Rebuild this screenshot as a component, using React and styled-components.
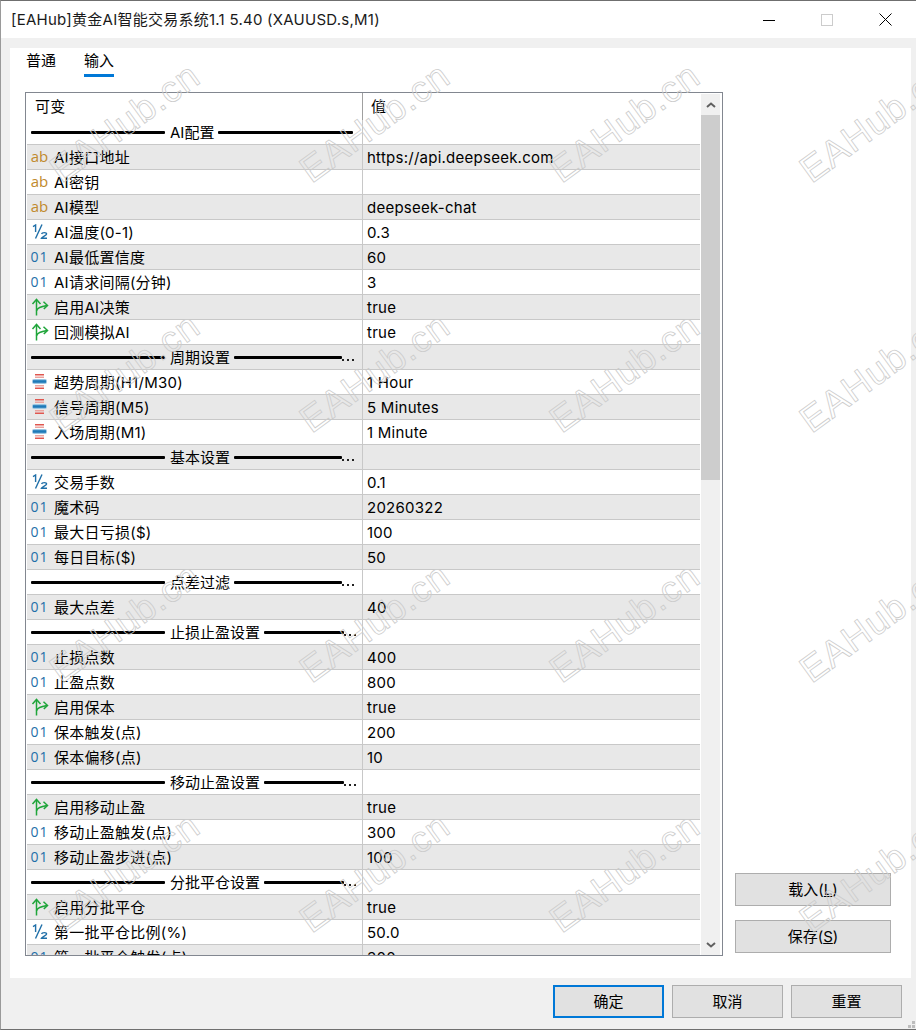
import styled, { createGlobalStyle } from 'styled-components';

const GlobalStyle = createGlobalStyle`
  html, body { margin: 0; padding: 0; background: #f0f0f0; }
  * { box-sizing: border-box; }
`

const FONT = `Inter, "Noto Sans CJK SC", sans-serif`

const Window = styled.div`
  position: relative;
  width: 916px;
  height: 1030px;
  display: flex;
  flex-direction: column;
  overflow: hidden;
  background: #f0f0f0;
  border-top: 1px solid #6f6f6f;
  border-bottom: 1px solid #6f6f6f;
  border-left: 1px solid #9a9a9a;
  font: 15px/20px ${FONT};
  letter-spacing: 0.25px;
  color: #000;
`
const TitleBar = styled.div`
  height: 37px;
  flex: none;
  display: flex;
  align-items: center;
  background: #fff;
  padding-left: 10px;
`
const Title = styled.div`
  flex: 1;
  color: #1a1a1a;
`
const WinControls = styled.div`
  display: flex;
  padding-right: 1px;
`
const WinBtn = styled.div`
  width: 58.5px;
  height: 37px;
  display: flex;
  align-items: center;
  justify-content: center;
`
const Panel = styled.div`
  flex: none;
  height: 930px;
  margin: 10px 5px 0 9px;
  background: #fff;
  display: flex;
  flex-direction: column;
`
const Tabs = styled.div`
  height: 29px;
  flex: none;
  display: flex;
  gap: 28px;
  padding-left: 16px;
  letter-spacing: 0;
`
const Tab = styled.div`
  height: 29px;
  padding-top: 3px;
  border-bottom: ${props => props.$active ? '3px solid #0078d7' : 'none'};
`
const Content = styled.div`
  flex: none;
  display: flex;
  margin: 15px 0 0 15px;
`
const TableFrame = styled.div`
  width: 698px;
  height: 864px;
  flex: none;
  display: flex;
  border: 1px solid #828790;
  padding-left: 1px;
  background: #fff;
`
const List = styled.div`
  width: 673px;
  flex: none;
  overflow: hidden;
`
const HeaderRow = styled.div`
  height: 27px;
  display: grid;
  grid-template-columns: 335px 1fr;
`
const HeaderCell = styled.div`
  padding: 4px 0 0 8px;
  border-left: ${props => props.$right ? '1px solid #a0a0a0' : 'none'};
`
const Row = styled.div`
  height: 25px;
  display: grid;
  grid-template-columns: 335px 1fr;
  background: ${props => props.$alt ? '#e8e8e8' : '#fff'};
  border-bottom: 1px solid #c8c8c8;
`
const NameCell = styled.div`
  display: flex;
  align-items: center;
  white-space: nowrap;
`
const NameText = styled.span`
  margin-top: 2px;
`
const GroupCell = styled.div`
  display: flex;
  align-items: center;
  padding-left: 4px;
  white-space: nowrap;
`
const IconSlot = styled.div`
  width: 27px;
  height: 24px;
  flex: none;
  display: flex;
  align-items: center;
  justify-content: center;
  padding-right: 2px;
`
const TypeText = styled.span`
  font: ${props => props.$size}px/16px "Open Sans", sans-serif;
  letter-spacing: ${props => props.$spacing}px;
  color: ${props => props.$color};
  position: relative;
  top: ${props => props.$top}px;
`
const ValueCell = styled.div`
  display: flex;
  align-items: center;
  padding: 2px 0 0 4px;
  border-left: 1px solid #c8c8c8;
  white-space: nowrap;
`
const Rule = styled.div`
  height: 3px;
  flex: none;
  width: ${props => props.$width}px;
  background: #000;
  border-radius: 1px;
`
const GroupLabel = styled.span`
  margin: 2px 4px 0 5px;
  letter-spacing: 0;
`
const Dots = styled.span`
  width: 12px;
  height: 2px;
  margin-top: 5px;
  display: flex;
  justify-content: space-between;
  flex: none;
`
const Dot = styled.i`
  width: 2px;
  height: 2px;
  background: #222;
`
const ScrollBar = styled.div`
  width: 19px;
  flex: none;
  margin-left: 1px;
  margin-top: 1px;
  background: #f0f0f0;
  display: flex;
  flex-direction: column;
`
const ScrollArrow = styled.div`
  height: 21px;
  flex: none;
  display: flex;
  align-items: center;
  justify-content: center;
`
const ScrollThumb = styled.div`
  height: 365px;
  flex: none;
  background: #cdcdcd;
`
const ScrollRest = styled.div`
  flex: 1;
`
const SideColumn = styled.div`
  width: 156px;
  margin-left: 12px;
  padding-bottom: 3px;
  display: flex;
  flex-direction: column;
  justify-content: flex-end;
  gap: 14px;
`
const Button = styled.div`
  height: 33px;
  width: ${props => props.$wide ? '156px' : '111px'};
  display: flex;
  align-items: center;
  justify-content: center;
  letter-spacing: 0;
  background: #e1e1e1;
  border: ${props => props.$primary ? '2px solid #0078d7' : '1px solid #adadad'};
`
const Mnemonic = styled.span`
  text-decoration: underline;
`
const Footer = styled.div`
  flex: 1;
  display: flex;
  justify-content: flex-end;
  gap: 8px;
  padding: 7px 14px 0 0;
`
const Grip = styled.div`
  position: absolute;
  right: 1px;
  bottom: 1px;
  width: 11px;
  height: 11px;
`
const WatermarkLayer = styled.div`
  position: absolute;
  left: -1px;
  top: -3px;
  display: grid;
  grid-template-columns: repeat(4, 250px);
  grid-template-rows: repeat(4, 250px);
  pointer-events: none;
`
const Watermark = styled.div`
  display: flex;
  align-items: center;
  justify-content: center;
  font: 37px/44px "Liberation Sans", sans-serif;
  letter-spacing: 1px;
  color: transparent;
  -webkit-text-stroke: 0.8px #cccccc;
  transform: rotate(-36deg);
  white-space: nowrap;
`

const AB = () => <TypeText $color="#c08a2c" $size={15} $spacing={0} $top={-1}>ab</TypeText>
const INT = () => <TypeText $color="#1f6fa8" $size={14} $spacing={1} $top={0}>01</TypeText>

const HalfIcon = () => (
  <svg width="16" height="16" viewBox="0 0 16 16" fill="none" stroke="#1f6fa8" strokeWidth="1.4">
    <path d="M1 2.6 L3.6 1 V8" />
    <path d="M10 .5 L3.5 14.5" />
    <path d="M9.6 10 C10 8.2 14.6 8.2 14.6 10 C14.6 11.6 10 12.4 9.4 14.3 H15" />
  </svg>
)

const BoolIcon = () => (
  <svg width="18" height="18" viewBox="0 0 18 18" fill="none" stroke="#1fa53a" strokeWidth="1.5">
    <path d="M5.5 17.5 V2" />
    <path d="M1.5 6 L5.5 1.5 L9.5 6" />
    <path d="M5.5 13 C6 9.5 10 8.5 16 7.5" />
    <path d="M12.5 3.8 L16.5 7.4 L12.8 11" />
  </svg>
)

const EnumIcon = () => (
  <svg width="15" height="16" viewBox="0 0 15 16">
    <rect x="3" y="0" width="9" height="1.5" fill="#e0564f" />
    <rect x="3" y="2.5" width="9" height="1.5" fill="#eaa5a1" />
    <rect x="0" y="5" width="15" height="5" rx="2" fill="#9cc6e2" />
    <rect x="1" y="6.2" width="13" height="2.6" fill="#1f7ab8" />
    <rect x="3" y="11" width="9" height="1.5" fill="#eaa5a1" />
    <rect x="3" y="13.5" width="9" height="1.5" fill="#e0564f" />
  </svg>
)

const ICONS = { ab: AB, int: INT, half: HalfIcon, bool: BoolIcon, enum: EnumIcon }

const rows = [
  { group: 'AI配置', right: 135, full: true },
  { icon: 'ab', name: 'AI接口地址', value: 'https://api.deepseek.com' },
  { icon: 'ab', name: 'AI密钥', value: '' },
  { icon: 'ab', name: 'AI模型', value: 'deepseek-chat' },
  { icon: 'half', name: 'AI温度(0-1)', value: '0.3' },
  { icon: 'int', name: 'AI最低置信度', value: '60' },
  { icon: 'int', name: 'AI请求间隔(分钟)', value: '3' },
  { icon: 'bool', name: '启用AI决策', value: 'true' },
  { icon: 'bool', name: '回测模拟AI', value: 'true' },
  { group: '周期设置', right: 108 },
  { icon: 'enum', name: '超势周期(H1/M30)', value: '1 Hour' },
  { icon: 'enum', name: '信号周期(M5)', value: '5 Minutes' },
  { icon: 'enum', name: '入场周期(M1)', value: '1 Minute' },
  { group: '基本设置', right: 108 },
  { icon: 'half', name: '交易手数', value: '0.1' },
  { icon: 'int', name: '魔术码', value: '20260322' },
  { icon: 'int', name: '最大日亏损($)', value: '100' },
  { icon: 'int', name: '每日目标($)', value: '50' },
  { group: '点差过滤', right: 108 },
  { icon: 'int', name: '最大点差', value: '40' },
  { group: '止损止盈设置', right: 80 },
  { icon: 'int', name: '止损点数', value: '400' },
  { icon: 'int', name: '止盈点数', value: '800' },
  { icon: 'bool', name: '启用保本', value: 'true' },
  { icon: 'int', name: '保本触发(点)', value: '200' },
  { icon: 'int', name: '保本偏移(点)', value: '10' },
  { group: '移动止盈设置', right: 80 },
  { icon: 'bool', name: '启用移动止盈', value: 'true' },
  { icon: 'int', name: '移动止盈触发(点)', value: '300' },
  { icon: 'int', name: '移动止盈步进(点)', value: '100' },
  { group: '分批平仓设置', right: 80 },
  { icon: 'bool', name: '启用分批平仓', value: 'true' },
  { icon: 'half', name: '第一批平仓比例(%)', value: '50.0' },
  { icon: 'int', name: '第一批平仓触发(点)', value: '300' },
]

const App = () => {
  return (
    <Window>
      <GlobalStyle />
      <TitleBar>
        <Title>[EAHub]黄金AI智能交易系统1.1 5.40 (XAUUSD.s,M1)</Title>
        <WinControls>
          <WinBtn>
            <svg width="12" height="12" viewBox="0 0 12 12"><path d="M0 6.5H12" stroke="#000" /></svg>
          </WinBtn>
          <WinBtn>
            <svg width="12" height="12" viewBox="0 0 12 12"><rect x=".5" y=".5" width="11" height="11" fill="none" stroke="#ccc" /></svg>
          </WinBtn>
          <WinBtn>
            <svg width="13" height="13" viewBox="0 0 13 13"><path d="M.5 .5L12.5 12.5M12.5 .5L.5 12.5" stroke="#000" /></svg>
          </WinBtn>
        </WinControls>
      </TitleBar>
      <Panel>
        <Tabs>
          <Tab>普通</Tab>
          <Tab $active>输入</Tab>
        </Tabs>
        <Content>
          <TableFrame>
            <List>
              <HeaderRow>
                <HeaderCell>可变</HeaderCell>
                <HeaderCell $right>值</HeaderCell>
              </HeaderRow>
              {rows.map((row, i) => {
                const alt = i % 2 === 1
                if (row.group) {
                  return (
                    <Row key={row.group} $alt={alt}>
                      <GroupCell>
                        <Rule $width={134} />
                        <GroupLabel>{row.group}</GroupLabel>
                        <Rule $width={row.right} />
                        {!row.full && <Dots><Dot /><Dot /><Dot /></Dots>}
                      </GroupCell>
                      <ValueCell />
                    </Row>
                  )
                }
                const Icon = ICONS[row.icon]
                return (
                  <Row key={row.name} $alt={alt}>
                    <NameCell>
                      <IconSlot><Icon /></IconSlot>
                      <NameText>{row.name}</NameText>
                    </NameCell>
                    <ValueCell>{row.value}</ValueCell>
                  </Row>
                )
              })}
            </List>
            <ScrollBar>
              <ScrollArrow>
                <svg width="10" height="6" viewBox="0 0 10 6"><path d="M1 5L5 1.5L9 5" fill="none" stroke="#606060" strokeWidth="2" /></svg>
              </ScrollArrow>
              <ScrollThumb />
              <ScrollRest />
              <ScrollArrow>
                <svg width="10" height="6" viewBox="0 0 10 6"><path d="M1 1L5 4.5L9 1" fill="none" stroke="#606060" strokeWidth="2" /></svg>
              </ScrollArrow>
            </ScrollBar>
          </TableFrame>
          <SideColumn>
            <Button $wide>载入(<Mnemonic>L</Mnemonic>)</Button>
            <Button $wide>保存(<Mnemonic>S</Mnemonic>)</Button>
          </SideColumn>
        </Content>
      </Panel>
      <Footer>
        <Button $primary>确定</Button>
        <Button>取消</Button>
        <Button>重置</Button>
      </Footer>
      <Grip>
        <svg width="11" height="11" viewBox="0 0 11 11" fill="#bdbdbd">
          <rect x="8" y="0" width="3" height="3" />
          <rect x="4" y="4" width="3" height="3" />
          <rect x="8" y="4" width="3" height="3" />
          <rect x="0" y="8" width="3" height="3" />
          <rect x="4" y="8" width="3" height="3" />
          <rect x="8" y="8" width="3" height="3" />
        </svg>
      </Grip>
      <WatermarkLayer>
        {Array.from({ length: 16 }, (_, i) => <Watermark key={i}>EAHub.cn</Watermark>)}
      </WatermarkLayer>
    </Window>
  )
}

export default App
